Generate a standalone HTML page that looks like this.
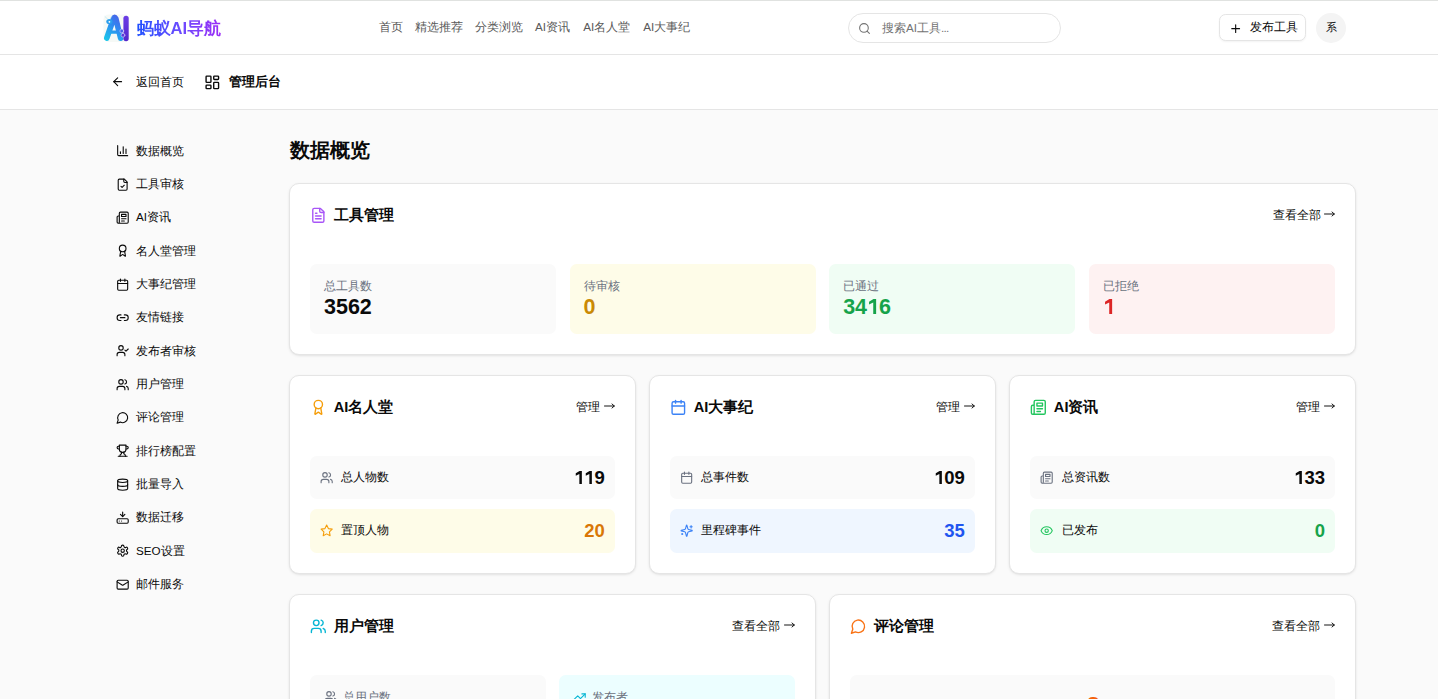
<!DOCTYPE html>
<html><head><meta charset="utf-8">
<style>
*{box-sizing:border-box;margin:0;padding:0}
html,body{width:1438px;height:699px;overflow:hidden;background:#fafafa;font-family:"Liberation Sans",sans-serif;color:#0a0a0a}
.abs{position:absolute}
svg{display:block;fill:none;stroke:currentColor;stroke-width:2;stroke-linecap:round;stroke-linejoin:round}
#hdr{position:absolute;left:0;top:0;width:1438px;height:55px;background:#fff;border-top:1px solid #e0e2e0;border-bottom:1px solid #e5e5e5}
#sub{position:absolute;left:0;top:55px;width:1438px;height:55px;background:#fff;border-bottom:1px solid #e5e5e5}
.nav{position:absolute;top:16.5px;font-size:11.67px;line-height:18px;color:#5a5a5a;white-space:nowrap}
.side{position:absolute;left:116px;height:20px;display:flex;align-items:center;font-size:11.67px;color:#0a0a0a;white-space:nowrap}
.side svg{width:13.33px;height:13.33px;margin-right:6.67px;flex:none}
.card{position:absolute;background:#fff;border:1px solid #e5e5e5;border-radius:10px;box-shadow:0 1px 3px rgba(0,0,0,.08),0 1px 2px -1px rgba(0,0,0,.08)}
.ch{position:absolute;left:20px;right:20px;top:20px;height:23px;display:flex;align-items:center;justify-content:space-between}
.ct{display:flex;align-items:center;font-size:14.6px;font-weight:bold;color:#0a0a0a;white-space:nowrap}
.ct svg{width:16.67px;height:16.67px;margin-right:7px}
.more{display:flex;align-items:center;font-size:11.67px;color:#0a0a0a;white-space:nowrap}
.arr{width:11px;height:6px;margin-left:3.5px;margin-top:-3px}
.sbox{position:absolute;top:80px;height:70px;border-radius:6.67px;padding:13.5px 14px}
.sl{font-size:11.67px;line-height:16px;color:#6b7280;white-space:nowrap}
.sn{font-size:21.5px;line-height:25px;margin-top:1px;font-weight:bold;white-space:nowrap}
.row{position:absolute;left:20px;right:20px;height:43.3px;border-radius:6.67px;display:flex;align-items:center;justify-content:space-between;padding:0 10px}
.rl{display:flex;align-items:center;font-size:11.67px;color:#0a0a0a;white-space:nowrap}
.rl svg{width:13.33px;height:13.33px;margin-right:8px}
.one{display:inline-block;width:.556em;height:.698em;vertical-align:baseline}
.one svg{width:100%;height:100%}
.rn{font-size:18.5px;font-weight:bold;white-space:nowrap}
</style></head><body>
<div id="hdr">
  <!-- logo -->
  <svg class="abs" style="left:103px;top:13px;width:27px;height:28px" viewBox="103 13 27 28">
    <defs>
      <linearGradient id="lg1" gradientUnits="userSpaceOnUse" x1="104" y1="38" x2="122" y2="16"><stop offset="0" stop-color="#19c8ea"/><stop offset=".55" stop-color="#2f8cf0"/><stop offset="1" stop-color="#4a5ee8"/></linearGradient>
      <linearGradient id="lg2" gradientUnits="userSpaceOnUse" x1="0" y1="15" x2="0" y2="40"><stop offset="0" stop-color="#6b3de6"/><stop offset="1" stop-color="#5526cc"/></linearGradient>
    </defs>
    <rect x="103.5" y="13.5" width="26" height="27.5" rx="5" fill="#f6f9f6" stroke="none"/>
    <path d="M106.8 37 L113.6 17.5 Q114.6 15.3 115.8 17.5 L120.6 37.2" stroke="url(#lg1)" stroke-width="5.6" fill="none"/>
    <path d="M109.5 31.2 H118.5" stroke="url(#lg1)" stroke-width="3.2"/>
    <rect x="123.4" y="14.8" width="5.3" height="25.4" rx="2.65" fill="url(#lg2)" stroke="none"/>
    <ellipse cx="109.4" cy="20.6" rx="3.1" ry="2.7" fill="#2c9fee" stroke="none"/>
    <circle cx="109.4" cy="20.8" r=".9" fill="#fff" stroke="none"/>
    <path d="M107.8 18.3 105 15.6M110.3 18 111.8 15.2" stroke="#a6e3f6" stroke-width=".6"/>
    <circle cx="121.8" cy="30" r="1.9" fill="#4a5ee8" stroke="#f0eaff" stroke-width=".5"/>
    <circle cx="123" cy="34.2" r="1.9" fill="#5a3ad8" stroke="#f0eaff" stroke-width=".5"/>
  </svg>
  <div class="abs" style="left:136.5px;top:17.5px;font-size:16.67px;line-height:20px;font-weight:bold;white-space:nowrap;background:linear-gradient(90deg,#1f50ff,#6a4cff 50%,#9b2cf6);-webkit-background-clip:text;background-clip:text;color:transparent">蚂蚁AI导航</div>
  <div class="nav" style="left:379px">首页</div>
  <div class="nav" style="left:414.5px">精选推荐</div>
  <div class="nav" style="left:475px">分类浏览</div>
  <div class="nav" style="left:535px">AI资讯</div>
  <div class="nav" style="left:583.3px">AI名人堂</div>
  <div class="nav" style="left:643.3px">AI大事纪</div>
  <!-- search -->
  <div class="abs" style="left:848px;top:12px;width:213px;height:30px;border:1px solid #e5e5e5;border-radius:15px;background:#fff"></div>
  <svg class="abs" style="left:857.5px;top:20.6px;width:13px;height:13px;color:#737373" viewBox="0 0 24 24"><circle cx="11" cy="11" r="8"/><path d="m21 21-4.3-4.3"/></svg>
  <div class="abs" style="left:882px;top:17.5px;font-size:11.67px;line-height:18px;color:#737373;white-space:nowrap">搜索AI工具<span style="letter-spacing:-.7px">...</span></div>
  <!-- publish btn -->
  <div class="abs" style="left:1219px;top:13px;width:87px;height:27px;border:1px solid #e5e5e5;border-radius:6.67px;background:#fff;box-shadow:0 1px 2px rgba(0,0,0,.05)"></div>
  <svg class="abs" style="left:1229px;top:20.5px;width:13.33px;height:13.33px;color:#0a0a0a" viewBox="0 0 24 24"><path d="M5 12h14"/><path d="M12 5v14"/></svg>
  <div class="abs" style="left:1250px;top:17px;font-size:11.67px;line-height:18px;color:#0a0a0a;white-space:nowrap">发布工具</div>
  <div class="abs" style="left:1316px;top:12px;width:30px;height:30px;border-radius:15px;background:#f4f4f4;font-size:11px;line-height:28.5px;text-align:center;color:#0a0a0a">系</div>
</div>

<div id="sub">
  <svg class="abs" style="left:111px;top:19.5px;width:13.33px;height:13.33px" viewBox="0 0 24 24"><path d="m12 19-7-7 7-7"/><path d="M19 12H5"/></svg>
  <div class="abs" style="left:136px;top:17px;font-size:11.67px;line-height:20px;white-space:nowrap">返回首页</div>
  <svg class="abs" style="left:204px;top:19px;width:16.67px;height:16.67px" viewBox="0 0 24 24"><rect width="7" height="9" x="3" y="3" rx="1"/><rect width="7" height="5" x="14" y="3" rx="1"/><rect width="7" height="9" x="14" y="12" rx="1"/><rect width="7" height="5" x="3" y="16" rx="1"/></svg>
  <div class="abs" style="left:228.5px;top:17px;font-size:13.33px;line-height:20px;font-weight:bold;white-space:nowrap">管理后台</div>
</div>

<!-- sidebar -->
<div class="side" style="top:141px"><svg viewBox="0 0 24 24"><path d="M3 3v16a2 2 0 0 0 2 2h16"/><path d="M18 17V9"/><path d="M13 17V5"/><path d="M8 17v-3"/></svg>数据概览</div>
<div class="side" style="top:174.3px"><svg viewBox="0 0 24 24"><path d="M15 2H6a2 2 0 0 0-2 2v16a2 2 0 0 0 2 2h12a2 2 0 0 0 2-2V7Z"/><path d="M14 2v4a2 2 0 0 0 2 2h4"/><path d="m9 15 2 2 4-4"/></svg>工具审核</div>
<div class="side" style="top:207.7px"><svg viewBox="0 0 24 24"><path d="M4 22h16a2 2 0 0 0 2-2V4a2 2 0 0 0-2-2H8a2 2 0 0 0-2 2v16a2 2 0 0 1-2 2Zm0 0a2 2 0 0 1-2-2v-9c0-1.1.9-2 2-2h2"/><path d="M18 14h-8"/><path d="M15 18h-5"/><path d="M10 6h8v4h-8V6Z"/></svg>AI资讯</div>
<div class="side" style="top:241px"><svg viewBox="0 0 24 24"><path d="m15.477 12.89 1.515 8.526a.5.5 0 0 1-.81.47l-3.58-2.687a1 1 0 0 0-1.197 0l-3.586 2.686a.5.5 0 0 1-.81-.469l1.514-8.526"/><circle cx="12" cy="8" r="6"/></svg>名人堂管理</div>
<div class="side" style="top:274.3px"><svg viewBox="0 0 24 24"><path d="M8 2v4"/><path d="M16 2v4"/><rect width="18" height="18" x="3" y="4" rx="2"/><path d="M3 10h18"/></svg>大事纪管理</div>
<div class="side" style="top:307.7px"><svg viewBox="0 0 24 24"><path d="M9 17H7A5 5 0 0 1 7 7h2"/><path d="M15 7h2a5 5 0 1 1 0 10h-2"/><line x1="8" x2="16" y1="12" y2="12"/></svg>友情链接</div>
<div class="side" style="top:341px"><svg viewBox="0 0 24 24"><path d="M16 21v-2a4 4 0 0 0-4-4H6a4 4 0 0 0-4 4v2"/><circle cx="9" cy="7" r="4"/><polyline points="16 11 18 13 22 9"/></svg>发布者审核</div>
<div class="side" style="top:374.3px"><svg viewBox="0 0 24 24"><path d="M16 21v-2a4 4 0 0 0-4-4H6a4 4 0 0 0-4 4v2"/><circle cx="9" cy="7" r="4"/><path d="M22 21v-2a4 4 0 0 0-3-3.87"/><path d="M16 3.13a4 4 0 0 1 0 7.75"/></svg>用户管理</div>
<div class="side" style="top:407.7px"><svg viewBox="0 0 24 24"><path d="M7.9 20A9 9 0 1 0 4 16.1L2 22Z"/></svg>评论管理</div>
<div class="side" style="top:441px"><svg viewBox="0 0 24 24"><path d="M6 9H4.5a2.5 2.5 0 0 1 0-5H6"/><path d="M18 9h1.5a2.5 2.5 0 0 0 0-5H18"/><path d="M4 22h16"/><path d="M10 14.66V17c0 .55-.47.98-.97 1.21C7.850 18.75 7 20.24 7 22"/><path d="M14 14.66V17c0 .55.47.98.97 1.21C16.15 18.75 17 20.24 17 22"/><path d="M18 2H6v7a6 6 0 0 0 12 0V2Z"/></svg>排行榜配置</div>
<div class="side" style="top:474.3px"><svg viewBox="0 0 24 24"><ellipse cx="12" cy="5" rx="9" ry="3"/><path d="M3 5V19A9 3 0 0 0 21 19V5"/><path d="M3 12A9 3 0 0 0 21 12"/></svg>批量导入</div>
<div class="side" style="top:507.7px"><svg viewBox="0 0 24 24"><path d="M12 2v8"/><path d="m16 6-4 4-4-4"/><rect width="20" height="8" x="2" y="14" rx="2"/><path d="M6 18h.01"/><path d="M10 18h.01"/></svg>数据迁移</div>
<div class="side" style="top:541px"><svg viewBox="0 0 24 24"><path d="M12.22 2h-.44a2 2 0 0 0-2 2v.18a2 2 0 0 1-1 1.73l-.43.25a2 2 0 0 1-2 0l-.15-.08a2 2 0 0 0-2.73.73l-.22.38a2 2 0 0 0 .73 2.73l.15.1a2 2 0 0 1 1 1.72v.51a2 2 0 0 1-1 1.74l-.15.09a2 2 0 0 0-.73 2.73l.22.38a2 2 0 0 0 2.730.73l.15-.08a2 2 0 0 1 2 0l.43.25a2 2 0 0 1 1 1.73V20a2 2 0 0 0 2 2h.44a2 2 0 0 0 2-2v-.18a2 2 0 0 1 1-1.73l.43-.25a2 2 0 0 1 2 0l.15.08a2 2 0 0 0 2.73-.73l.22-.39a2 2 0 0 0-.73-2.73l-.15-.08a2 2 0 0 1-1-1.74v-.5a2 2 0 0 1 1-1.74l.15-.09a2 2 0 0 0 .73-2.73l-.22-.38a2 2 0 0 0-2.73-.73l-.15.08a2 2 0 0 1-2 0l-.43-.25a2 2 0 0 1-1-1.73V4a2 2 0 0 0-2-2z"/><circle cx="12" cy="12" r="3"/></svg>SEO设置</div>
<div class="side" style="top:574.3px"><svg viewBox="0 0 24 24"><rect width="20" height="16" x="2" y="4" rx="2"/><path d="m22 7-8.97 5.7a1.94 1.94 0 0 1-2.06 0L2 7"/></svg>邮件服务</div>

<!-- title -->
<div class="abs" style="left:290px;top:137px;font-size:19.6px;line-height:26px;font-weight:bold;white-space:nowrap">数据概览</div>

<!-- tools card -->
<div class="card" style="left:289px;top:183px;width:1067px;height:172px">
  <div class="ch"><div class="ct" style="color:#0a0a0a"><svg viewBox="0 0 24 24" style="color:#a855f7"><path d="M15 2H6a2 2 0 0 0-2 2v16a2 2 0 0 0 2 2h12a2 2 0 0 0 2-2V7Z"/><path d="M14 2v4a2 2 0 0 0 2 2h4"/><path d="M10 9H8"/><path d="M16 13H8"/><path d="M16 17H8"/></svg>工具管理</div><div class="more">查看全部<svg class="arr" viewBox="0 0 11 6"><path d="M0.5 3H10.3M8 1 10.3 3 8 5" stroke-width="0.95"/></svg></div></div>
  <div class="sbox" style="left:20px;width:246.25px;background:#fafafa"><div class="sl">总工具数</div><div class="sn" style="color:#0a0a0a">3562</div></div>
  <div class="sbox" style="left:279.58px;width:246.25px;background:#fefce8"><div class="sl">待审核</div><div class="sn" style="color:#ca8a04">0</div></div>
  <div class="sbox" style="left:539.17px;width:246.25px;background:#f0fdf4"><div class="sl">已通过</div><div class="sn" style="color:#16a34a">34<span class="one"><svg viewBox="0 0 556 698"><polygon points="300,0 425,0 425,698 290,698 290,165 95,255 95,125" fill="currentColor" stroke="none"/></svg></span>6</div></div>
  <div class="sbox" style="left:798.75px;width:246.25px;background:#fef2f2"><div class="sl">已拒绝</div><div class="sn" style="color:#dc2626"><span class="one"><svg viewBox="0 0 556 698"><polygon points="300,0 425,0 425,698 290,698 290,165 95,255 95,125" fill="currentColor" stroke="none"/></svg></span></div></div>
</div>

<!-- row 2 -->
<div class="card" style="left:289px;top:375px;width:346.8px;height:199px">
  <div class="ch"><div class="ct"><svg viewBox="0 0 24 24" style="color:#f59e0b"><path d="m15.477 12.89 1.515 8.526a.5.5 0 0 1-.81.47l-3.58-2.687a1 1 0 0 0-1.197 0l-3.586 2.686a.5.5 0 0 1-.81-.469l1.514-8.526"/><circle cx="12" cy="8" r="6"/></svg>AI名人堂</div><div class="more">管理<svg class="arr" viewBox="0 0 11 6"><path d="M0.5 3H10.3M8 1 10.3 3 8 5" stroke-width="0.95"/></svg></div></div>
  <div class="row" style="top:80px;background:#fafafa"><div class="rl"><svg viewBox="0 0 24 24" style="color:#6b7280"><path d="M16 21v-2a4 4 0 0 0-4-4H6a4 4 0 0 0-4 4v2"/><circle cx="9" cy="7" r="4"/><path d="M22 21v-2a4 4 0 0 0-3-3.87"/><path d="M16 3.13a4 4 0 0 1 0 7.75"/></svg>总人物数</div><div class="rn"><span class="one"><svg viewBox="0 0 556 698"><polygon points="300,0 425,0 425,698 290,698 290,165 95,255 95,125" fill="currentColor" stroke="none"/></svg></span><span class="one"><svg viewBox="0 0 556 698"><polygon points="300,0 425,0 425,698 290,698 290,165 95,255 95,125" fill="currentColor" stroke="none"/></svg></span>9</div></div>
  <div class="row" style="top:133.3px;background:#fefce8"><div class="rl"><svg viewBox="0 0 24 24" style="color:#f59e0b"><polygon points="12 2 15.09 8.26 22 9.27 17 14.14 18.18 21.02 12 17.77 5.82 21.02 7 14.14 2 9.27 8.91 8.26 12 2"/></svg>置顶人物</div><div class="rn" style="color:#d97706">20</div></div>
</div>
<div class="card" style="left:649.1px;top:375px;width:346.8px;height:199px">
  <div class="ch"><div class="ct"><svg viewBox="0 0 24 24" style="color:#3b82f6"><path d="M8 2v4"/><path d="M16 2v4"/><rect width="18" height="18" x="3" y="4" rx="2"/><path d="M3 10h18"/></svg>AI大事纪</div><div class="more">管理<svg class="arr" viewBox="0 0 11 6"><path d="M0.5 3H10.3M8 1 10.3 3 8 5" stroke-width="0.95"/></svg></div></div>
  <div class="row" style="top:80px;background:#fafafa"><div class="rl"><svg viewBox="0 0 24 24" style="color:#6b7280"><path d="M8 2v4"/><path d="M16 2v4"/><rect width="18" height="18" x="3" y="4" rx="2"/><path d="M3 10h18"/></svg>总事件数</div><div class="rn"><span class="one"><svg viewBox="0 0 556 698"><polygon points="300,0 425,0 425,698 290,698 290,165 95,255 95,125" fill="currentColor" stroke="none"/></svg></span>09</div></div>
  <div class="row" style="top:133.3px;background:#eff6ff"><div class="rl"><svg viewBox="0 0 24 24" style="color:#3b82f6"><path d="M9.937 15.5A2 2 0 0 0 8.5 14.063l-6.135-1.582a.5.5 0 0 1 0-.962L8.5 9.936A2 2 0 0 0 9.937 8.5l1.582-6.135a.5.5 0 0 1 .963 0L14.063 8.5A2 2 0 0 0 15.5 9.937l6.135 1.581a.5.5 0 0 1 0 .964L15.5 14.063a2 2 0 0 0-1.437 1.437l-1.582 6.135a.5.5 0 0 1-.963 0z"/><path d="M20 3v4"/><path d="M22 5h-4"/><path d="M4 17v2"/><path d="M5 18H3"/></svg>里程碑事件</div><div class="rn" style="color:#1f55f0">35</div></div>
</div>
<div class="card" style="left:1009.2px;top:375px;width:346.8px;height:199px">
  <div class="ch"><div class="ct"><svg viewBox="0 0 24 24" style="color:#22c55e"><path d="M4 22h16a2 2 0 0 0 2-2V4a2 2 0 0 0-2-2H8a2 2 0 0 0-2 2v16a2 2 0 0 1-2 2Zm0 0a2 2 0 0 1-2-2v-9c0-1.1.9-2 2-2h2"/><path d="M18 14h-8"/><path d="M15 18h-5"/><path d="M10 6h8v4h-8V6Z"/></svg>AI资讯</div><div class="more">管理<svg class="arr" viewBox="0 0 11 6"><path d="M0.5 3H10.3M8 1 10.3 3 8 5" stroke-width="0.95"/></svg></div></div>
  <div class="row" style="top:80px;background:#fafafa"><div class="rl"><svg viewBox="0 0 24 24" style="color:#6b7280"><path d="M4 22h16a2 2 0 0 0 2-2V4a2 2 0 0 0-2-2H8a2 2 0 0 0-2 2v16a2 2 0 0 1-2 2Zm0 0a2 2 0 0 1-2-2v-9c0-1.1.9-2 2-2h2"/><path d="M18 14h-8"/><path d="M15 18h-5"/><path d="M10 6h8v4h-8V6Z"/></svg>总资讯数</div><div class="rn"><span class="one"><svg viewBox="0 0 556 698"><polygon points="300,0 425,0 425,698 290,698 290,165 95,255 95,125" fill="currentColor" stroke="none"/></svg></span>33</div></div>
  <div class="row" style="top:133.3px;background:#f0fdf4"><div class="rl"><svg viewBox="0 0 24 24" style="color:#22c55e"><path d="M2.062 12.348a1 1 0 0 1 0-.696 10.75 10.75 0 0 1 19.876 0 1 1 0 0 1 0 .696 10.75 10.75 0 0 1-19.876 0"/><circle cx="12" cy="12" r="3"/></svg>已发布</div><div class="rn" style="color:#16a34a">0</div></div>
</div>

<!-- row 3 -->
<div class="card" style="left:289px;top:594px;width:526.8px;height:200px">
  <div class="ch"><div class="ct"><svg viewBox="0 0 24 24" style="color:#06b6d4"><path d="M16 21v-2a4 4 0 0 0-4-4H6a4 4 0 0 0-4 4v2"/><circle cx="9" cy="7" r="4"/><path d="M22 21v-2a4 4 0 0 0-3-3.87"/><path d="M16 3.13a4 4 0 0 1 0 7.75"/></svg>用户管理</div><div class="more">查看全部<svg class="arr" viewBox="0 0 11 6"><path d="M0.5 3H10.3M8 1 10.3 3 8 5" stroke-width="0.95"/></svg></div></div>
  <div class="sbox" style="left:20px;width:235.8px;background:#fafafa;padding-left:14px"><div class="sl" style="display:flex;align-items:center"><svg viewBox="0 0 24 24" style="width:13.33px;height:13.33px;margin-right:5.67px;color:#6b7280"><path d="M16 21v-2a4 4 0 0 0-4-4H6a4 4 0 0 0-4 4v2"/><circle cx="9" cy="7" r="4"/><path d="M22 21v-2a4 4 0 0 0-3-3.87"/><path d="M16 3.13a4 4 0 0 1 0 7.75"/></svg>总用户数</div></div>
  <div class="sbox" style="left:269.2px;width:235.8px;background:#ecfeff;padding-left:14px"><div class="sl" style="display:flex;align-items:center"><svg viewBox="0 0 24 24" style="width:13.33px;height:13.33px;margin-right:5.67px;color:#06b6d4"><polyline points="22 7 13.5 15.5 8.5 10.5 2 17"/><polyline points="16 7 22 7 22 13"/></svg>发布者</div></div>
</div>
<div class="card" style="left:829.2px;top:594px;width:526.8px;height:200px">
  <div class="ch"><div class="ct"><svg viewBox="0 0 24 24" style="color:#f97316"><path d="M7.9 20A9 9 0 1 0 4 16.1L2 22Z"/></svg>评论管理</div><div class="more">查看全部<svg class="arr" viewBox="0 0 11 6"><path d="M0.5 3H10.3M8 1 10.3 3 8 5" stroke-width="0.95"/></svg></div></div>
  <div class="sbox" style="left:20px;width:484.8px;height:120px;background:#fafafa"></div>
  <div class="abs" style="left:243px;top:96.5px;width:40px;text-align:center;font-size:28px;line-height:30px;font-weight:bold;color:#f4620e">0</div>
</div>
</body></html>
